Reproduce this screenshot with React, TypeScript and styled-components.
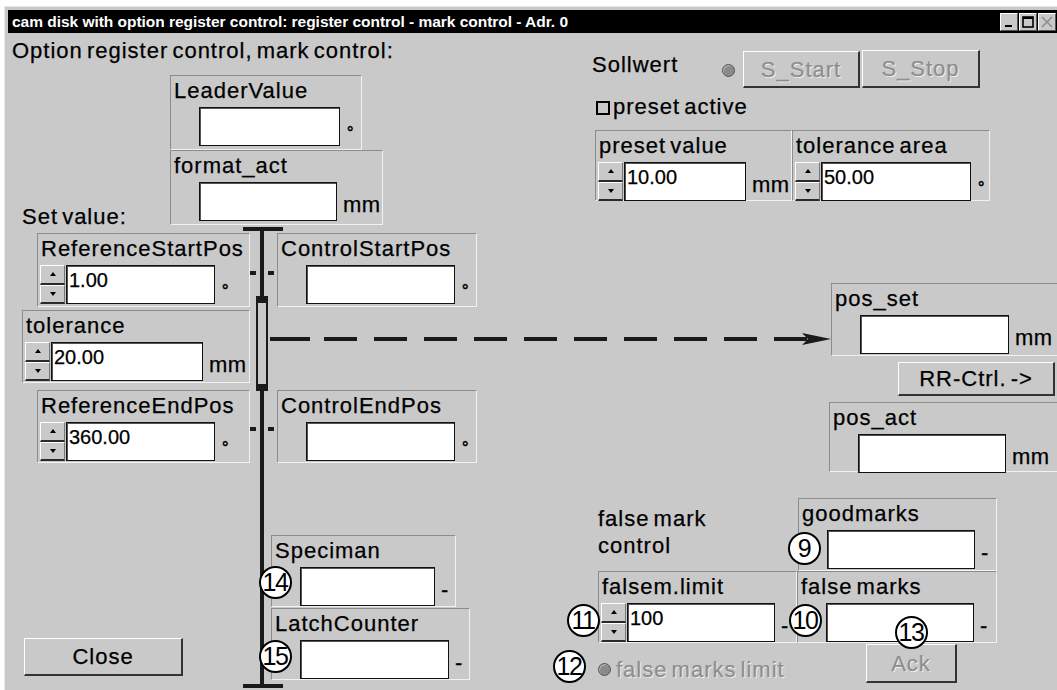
import React from 'react';
import styled, { createGlobalStyle } from 'styled-components';

const FACE = '#c9c9c9';

const GlobalStyle = createGlobalStyle`
  html, body {
    margin: 0;
    padding: 0;
    background: #ffffff;
  }
  body {
    font-family: "Liberation Sans", Arial, Helvetica, sans-serif;
  }
`;

const Window = styled.div`
  margin: 6px 0 0 4px;
  width: 1053px;
  height: 684px;
  box-sizing: border-box;
  border-top: 1px solid #e8e8e8;
  border-left: 1px solid #e8e8e8;
  padding: 3px 0 0 3px;
  background: ${FACE};
  display: flex;
  flex-direction: column;
  overflow: hidden;
  color: #000;
  font-size: 22px;
  line-height: 23px;
  letter-spacing: 1px;
  word-spacing: -3px;
  -webkit-text-stroke-width: 0.25px;
`;

const TitleBar = styled.div`
  height: 23px;
  flex-shrink: 0;
  background: #000;
  display: flex;
  align-items: center;
  padding-left: 4px;
`;

const TitleText = styled.div`
  color: #fff;
  font-weight: bold;
  font-size: 15.5px;
  letter-spacing: -0.03px;
  word-spacing: 0;
  white-space: nowrap;
  -webkit-text-stroke-width: 0;
`;

const TitleButtons = styled.div`
  margin-left: auto;
  margin-right: 1px;
  display: flex;
  gap: 1px;
`;

const TitleBtn = styled.div`
  width: 18px;
  height: 18px;
  box-sizing: border-box;
  background: ${FACE};
  border-top: 1px solid #fff;
  border-left: 1px solid #fff;
  border-right: 1px solid #555;
  border-bottom: 1px solid #555;
  display: flex;
  align-items: center;
  justify-content: center;
`;

const Body = styled.div`
  position: relative;
  flex: 1;
  display: flex;
  min-height: 0;
`;

const LeftPane = styled.div`
  width: 482px;
  flex-shrink: 0;
  display: flex;
  flex-direction: column;
`;

const RightPane = styled.div`
  flex: 1;
  min-width: 0;
  display: flex;
  flex-direction: column;
`;

const Heading = styled.div`
  margin: 6px 0 0 4px;
  white-space: nowrap;
`;

const FormatBlock = styled.div`
  margin-top: 13px;
  display: flex;
  align-items: flex-end;
`;

const SetValueLabel = styled.div`
  width: 148px;
  margin: 0 0 -3px 14px;
  white-space: nowrap;
`;

const Stack = styled.div<{ $ml?: number }>`
  display: flex;
  flex-direction: column;
  margin-left: ${p => p.$ml ?? 0}px;
`;

const Row = styled.div<{ $mt: number; $ml: number }>`
  display: flex;
  margin-top: ${p => p.$mt}px;
  margin-left: ${p => p.$ml}px;
`;

const GroupBox = styled.div<{ $w: number; $h: number; $ml?: number; $mt?: number }>`
  box-sizing: border-box;
  width: ${p => p.$w}px;
  height: ${p => p.$h}px;
  margin-left: ${p => p.$ml ?? 0}px;
  margin-top: ${p => p.$mt ?? 0}px;
  flex-shrink: 0;
  border-top: 1px solid #8c8c8c;
  border-left: 1px solid #8c8c8c;
  border-right: 1px solid #f2f2f2;
  border-bottom: 1px solid #f2f2f2;
  padding: 3px 0 0 2px;
  display: flex;
  flex-direction: column;
`;

const GroupLabel = styled.div`
  padding-left: 1px;
  white-space: nowrap;
`;

const FieldRow = styled.div`
  margin-top: 5px;
  display: flex;
  align-items: stretch;
`;

const SpinSlot = styled.div`
  width: 26px;
  flex-shrink: 0;
`;

const SpinCol = styled.div`
  width: 25px;
  height: 39px;
  display: flex;
  flex-direction: column;
`;

const SpinBtn = styled.div`
  flex: 1;
  box-sizing: border-box;
  background: ${FACE};
  border-top: 1px solid #fff;
  border-left: 1px solid #fff;
  border-right: 1px solid #777;
  border-bottom: 2px solid #2a2a2a;
  display: flex;
  align-items: center;
  justify-content: center;
`;

const ValueBox = styled.div<{ $w: number }>`
  width: ${p => p.$w}px;
  height: 39px;
  box-sizing: border-box;
  background: #fff;
  border: 1px solid #111;
  box-shadow: inset 1px 1px 0 #555;
  padding: 3px 0 0 2px;
  letter-spacing: 0;
  font-size: 20px;
  line-height: 23px;
`;

const Unit = styled.div<{ $deg?: boolean }>`
  margin-left: ${p => (p.$deg ? 7 : 6)}px;
  align-self: flex-end;
  margin-bottom: ${p => (p.$deg ? 2 : 5)}px;
  font-size: ${p => (p.$deg ? 16 : 22)}px;
  font-weight: ${p => (p.$deg ? 'bold' : 'normal')};
  letter-spacing: 0.5px;
  white-space: nowrap;
`;

const Button = styled.div<{ $w: number; $h: number; $off?: boolean; $ml?: number; $mt?: number }>`
  width: ${p => p.$w}px;
  height: ${p => p.$h}px;
  margin-left: ${p => p.$ml ?? 0}px;
  margin-top: ${p => p.$mt ?? 0}px;
  flex-shrink: 0;
  box-sizing: border-box;
  background: ${FACE};
  border-top: 1px solid #fff;
  border-left: 1px solid #fff;
  border-right: 2px solid #333;
  border-bottom: 2px solid #333;
  display: flex;
  align-items: center;
  justify-content: center;
  color: ${p => (p.$off ? '#8e8e8e' : '#000')};
  text-shadow: ${p => (p.$off ? '1px 1px 0 #f4f4f4' : 'none')};
  white-space: nowrap;
`;

const CounterBlock = styled.div`
  margin-top: 72px;
  display: flex;
  align-items: flex-end;
`;

const CloseSlot = styled.div`
  margin: 0 0 4px 16px;
`;

const SollRow = styled.div`
  margin: 17px 0 0 102px;
  display: flex;
  align-items: flex-start;
`;

const SollLabel = styled.div`
  width: 130px;
  margin-top: 3px;
`;

const Led = styled.div<{ $mt?: number }>`
  width: 13px;
  height: 13px;
  box-sizing: border-box;
  margin-top: ${p => p.$mt ?? 0}px;
  border-radius: 50%;
  background: #8a8a8a;
  border: 1px solid #555;
  box-shadow: inset 1px 1px 0 #b4b4b4;
  flex-shrink: 0;
`;

const CheckRow = styled.div`
  margin: 7px 0 0 106px;
  display: flex;
  align-items: center;
`;

const CheckBox = styled.div`
  width: 14px;
  height: 14px;
  box-sizing: border-box;
  border: 2px solid #000;
  margin-right: 3px;
  margin-top: 3px;
`;

const PresetRow = styled.div`
  margin: 12px 0 0 105px;
  display: flex;
`;

const PosColumn = styled.div`
  margin: 82px 0 0 341px;
  display: flex;
  flex-direction: column;
`;

const MarkGrid = styled.div`
  margin: 26px 0 0 108px;
  display: grid;
  grid-template-columns: 200px 200px;
  grid-template-rows: 73px 72px auto;
`;

const Caption = styled.div`
  padding-top: 7px;
  line-height: 27px;
`;

const LimitRow = styled.div`
  margin-top: 12px;
  display: flex;
  align-items: center;
  white-space: nowrap;
  color: #8e8e8e;
  text-shadow: 1px 1px 0 #f4f4f4;
`;

const LimitText = styled.span`
  margin-left: 5px;
`;

const Diagram = styled.svg`
  position: absolute;
  left: 0;
  top: 0;
  pointer-events: none;
`;

const Marker = styled.div<{ $x: number; $y: number }>`
  position: absolute;
  left: ${p => p.$x - 16}px;
  top: ${p => p.$y - 16}px;
  width: 33px;
  height: 33px;
  box-sizing: border-box;
  border: 2px solid #000;
  border-radius: 50%;
  background: #fff;
  display: flex;
  align-items: center;
  justify-content: center;
  font-size: 25px;
  letter-spacing: -1.5px;
  line-height: 1;
  padding-right: 1px;
  -webkit-text-stroke-width: 0;
`;

type FieldProps = {
  label: string;
  w: number;
  h: number;
  inputW: number;
  value?: string;
  unit?: string;
  spin?: boolean;
  ml?: number;
  mt?: number;
};

const Spinner = () => (
  <SpinCol>
    <SpinBtn>
      <svg width="6" height="4" viewBox="0 0 6 4">
        <polygon points="0,4 3,0 6,4" fill="#000" />
      </svg>
    </SpinBtn>
    <SpinBtn>
      <svg width="6" height="4" viewBox="0 0 6 4">
        <polygon points="0,0 6,0 3,4" fill="#000" />
      </svg>
    </SpinBtn>
  </SpinCol>
);

const Field = ({ label, w, h, inputW, value, unit, spin, ml, mt }: FieldProps) => (
  <GroupBox $w={w} $h={h} $ml={ml} $mt={mt}>
    <GroupLabel>{label}</GroupLabel>
    <FieldRow>
      <SpinSlot>{spin && <Spinner />}</SpinSlot>
      <ValueBox $w={inputW}>{value}</ValueBox>
      {unit && <Unit $deg={unit === '°'}>{unit}</Unit>}
    </FieldRow>
  </GroupBox>
);

// markers: centre points in body coordinates
const markers = [
  { n: '9', x: 796, y: 515 },
  { n: '10', x: 797, y: 587 },
  { n: '11', x: 575, y: 587 },
  { n: '12', x: 561, y: 633 },
  { n: '13', x: 903, y: 599 },
  { n: '14', x: 267, y: 549 },
  { n: '15', x: 267, y: 623 },
];

export default function App() {
  return (
    <>
      <GlobalStyle />
      <Window>
        <TitleBar>
          <TitleText>cam disk with option register control: register control - mark control - Adr. 0</TitleText>
          <TitleButtons>
            <TitleBtn>
              <svg width="10" height="12" viewBox="0 0 10 12">
                <rect x="1" y="9" width="7" height="2" fill="#000" />
              </svg>
            </TitleBtn>
            <TitleBtn>
              <svg width="12" height="12" viewBox="0 0 12 12">
                <rect x="1" y="1" width="10" height="10" fill="none" stroke="#000" strokeWidth="1.6" />
                <rect x="1" y="1" width="10" height="2" fill="#000" />
              </svg>
            </TitleBtn>
            <TitleBtn>
              <svg width="12" height="12" viewBox="0 0 12 12">
                <path d="M1 1 L11 11 M11 1 L1 11" stroke="#8e8e8e" strokeWidth="1.6" />
              </svg>
            </TitleBtn>
          </TitleButtons>
        </TitleBar>
        <Body>
          <LeftPane>
            <Heading>Option register control, mark control:</Heading>
            <FormatBlock>
              <SetValueLabel>Set value:</SetValueLabel>
              <Stack>
                <Field label="LeaderValue" w={192} h={75} inputW={141} unit="°" />
                <Field label="format_act" w={213} h={75} inputW={138} unit="mm" />
              </Stack>
            </FormatBlock>
            <Row $mt={8} $ml={29}>
              <Field label="ReferenceStartPos" w={213} h={74} inputW={149} spin value="1.00" unit="°" />
              <Field label="ControlStartPos" w={200} h={74} inputW={149} unit="°" ml={27} />
            </Row>
            <Row $mt={3} $ml={14}>
              <Field label="tolerance" w={228} h={73} inputW={152} spin value="20.00" unit="mm" />
            </Row>
            <Row $mt={7} $ml={29}>
              <Field label="ReferenceEndPos" w={213} h={73} inputW={149} spin value="360.00" unit="°" />
              <Field label="ControlEndPos" w={200} h={73} inputW={149} unit="°" ml={27} />
            </Row>
            <CounterBlock>
              <CloseSlot>
                <Button $w={159} $h={38}>Close</Button>
              </CloseSlot>
              <Stack $ml={88}>
                <Field label="Speciman" w={185} h={72} inputW={135} unit="-" />
                <Field label="LatchCounter" w={199} h={72} inputW={149} unit="-" mt={1} />
              </Stack>
            </CounterBlock>
          </LeftPane>

          <RightPane>
            <SollRow>
              <SollLabel>Sollwert</SollLabel>
              <Led $mt={14} />
              <Button $w={117} $h={37} $off $ml={8} $mt={1}>S_Start</Button>
              <Button $w={118} $h={38} $off $ml={2}>S_Stop</Button>
            </SollRow>
            <CheckRow>
              <CheckBox />
              <span>preset active</span>
            </CheckRow>
            <PresetRow>
              <Field label="preset value" w={197} h={71} inputW={122} spin value="10.00" unit="mm" />
              <Field label="tolerance area" w={198} h={71} inputW={150} spin value="50.00" unit="°" />
            </PresetRow>
            <PosColumn>
              <Field label="pos_set" w={240} h={73} inputW={149} unit="mm" />
              <Button $w={157} $h={34} $ml={67} $mt={6}>RR-Ctrl. -&gt;</Button>
              <Field label="pos_act" w={240} h={70} inputW={148} unit="mm" ml={-2} mt={6} />
            </PosColumn>
            <MarkGrid>
              <Caption>
                false mark
                <br />
                control
              </Caption>
              <Field label="goodmarks" w={199} h={73} inputW={148} unit="-" />
              <Field label="falsem.limit" w={199} h={72} inputW={148} spin value="100" unit="-" />
              <Field label="false marks" w={200} h={72} inputW={148} unit="-" ml={-1} />
              <LimitRow>
                <Led />
                <LimitText>false marks limit</LimitText>
              </LimitRow>
              <Button $w={91} $h={39} $off $ml={68} $mt={1}>Ack</Button>
            </MarkGrid>
          </RightPane>

          <Diagram width="1049" height="657" viewBox="0 0 1049 657">
            {/* vertical axis with end caps */}
            <rect x="235" y="194" width="40" height="4" fill="#1a1a1a" />
            <rect x="252" y="194" width="4" height="461" fill="#1a1a1a" />
            <rect x="235" y="651" width="40" height="4" fill="#1a1a1a" />
            {/* slider on the axis */}
            <rect x="249" y="264" width="10" height="93" fill={FACE} stroke="#1a1a1a" strokeWidth="2" />
            <rect x="249" y="264" width="10" height="6" fill="#1a1a1a" />
            <rect x="249" y="351" width="10" height="6" fill="#1a1a1a" />
            {/* connector ticks */}
            <rect x="242" y="238" width="6" height="4" fill="#1a1a1a" />
            <rect x="260" y="238" width="6" height="4" fill="#1a1a1a" />
            <rect x="242" y="394" width="6" height="4" fill="#1a1a1a" />
            <rect x="260" y="394" width="6" height="4" fill="#1a1a1a" />
            {/* dashed arrow to pos_set */}
            <rect x="262" y="304" width="40" height="4" fill="#1a1a1a" />
            <line x1="316" y1="306" x2="799" y2="306" stroke="#1a1a1a" strokeWidth="4" strokeDasharray="33 17" />
            <polygon points="794,300 823,306 794,312 800,306" fill="#1a1a1a" />
          </Diagram>

          {markers.map(m => (
            <Marker key={m.n} $x={m.x} $y={m.y}>
              {m.n}
            </Marker>
          ))}
        </Body>
      </Window>
    </>
  );
}
